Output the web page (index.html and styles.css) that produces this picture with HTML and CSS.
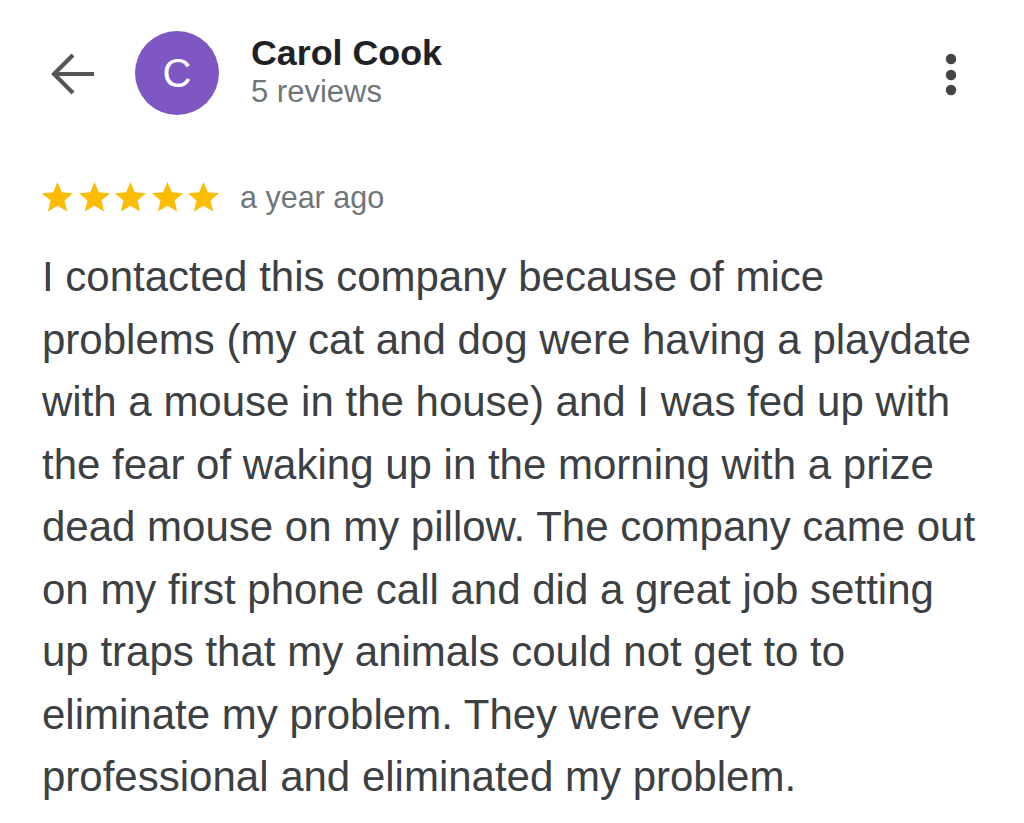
FILE: index.html
```html
<!DOCTYPE html>
<html>
<head>
<meta charset="utf-8">
<link rel="stylesheet" href="styles.css">
</head>
<body>
<div class="page">
  <header class="header">
    <svg class="back" width="44" height="44" viewBox="0 0 44 44"><path d="M43 22H4 M22 3L3 22L22 41" fill="none" stroke="#555" stroke-width="4.2"/></svg>
    <div class="avatar">C</div>
    <div class="who">
      <div class="name">Carol Cook</div>
      <div class="count">5 reviews</div>
    </div>
    <svg class="more" width="12" height="44" viewBox="0 0 12 44"><circle cx="6" cy="6" r="5.2" fill="#444"/><circle cx="6" cy="22" r="5.2" fill="#444"/><circle cx="6" cy="37" r="5.2" fill="#444"/></svg>
  </header>
  <div class="meta">
    <div class="stars">
      <svg viewBox="2 2 20 19.3"><path d="M12 17.27L18.18 21l-1.64-7.03L22 9.24l-7.19-.61L12 2 9.19 8.63 2 9.24l5.46 4.73L5.82 21z"/></svg>
      <svg viewBox="2 2 20 19.3"><path d="M12 17.27L18.18 21l-1.64-7.03L22 9.24l-7.19-.61L12 2 9.19 8.63 2 9.24l5.46 4.73L5.82 21z"/></svg>
      <svg viewBox="2 2 20 19.3"><path d="M12 17.27L18.18 21l-1.64-7.03L22 9.24l-7.19-.61L12 2 9.19 8.63 2 9.24l5.46 4.73L5.82 21z"/></svg>
      <svg viewBox="2 2 20 19.3"><path d="M12 17.27L18.18 21l-1.64-7.03L22 9.24l-7.19-.61L12 2 9.19 8.63 2 9.24l5.46 4.73L5.82 21z"/></svg>
      <svg viewBox="2 2 20 19.3"><path d="M12 17.27L18.18 21l-1.64-7.03L22 9.24l-7.19-.61L12 2 9.19 8.63 2 9.24l5.46 4.73L5.82 21z"/></svg>
    </div>
    <span class="when">a year ago</span>
  </div>
  <p class="review">I contacted this company because of mice<br>problems (my cat and dog were having a playdate<br>with a mouse in the house) and I was fed up with<br>the fear of waking up in the morning with a prize<br>dead mouse on my pillow. The company came out<br>on my first phone call and did a great job setting<br>up traps that my animals could not get to to<br>eliminate my problem. They were very<br>professional and eliminated my problem.</p>
</div>
</body>
</html>
```
FILE: styles.css
```css
html, body {
  margin: 0;
  padding: 0;
  background: #fff;
}
.page {
  width: 1024px;
  height: 823px;
  overflow: hidden;
  font-family: "Liberation Sans", Arial, sans-serif;
}
.header {
  display: flex;
  align-items: center;
  padding: 31px 0 0 51px;
  height: 84px;
}
.back {
  flex: none;
  margin-top: 2px;
}
.avatar {
  flex: none;
  width: 84px;
  height: 84px;
  border-radius: 50%;
  background: #7e57c2;
  color: #fff;
  font-size: 40px;
  display: flex;
  align-items: center;
  justify-content: center;
  margin-left: 40px;
}
.who {
  margin-left: 32px;
  flex: 1;
  align-self: flex-start;
  padding-top: 1px;
}
.name {
  font-size: 35.8px;
  font-weight: bold;
  color: #202124;
  line-height: 42px;
}
.count {
  font-size: 31px;
  color: #70757a;
  line-height: 36px;
}
.more {
  flex: none;
  margin-right: 67px;
  margin-top: 3px;
}
.meta {
  display: flex;
  align-items: center;
  padding: 64px 0 0 42px;
}
.stars {
  display: flex;
  gap: 5.5px;
}
.stars svg {
  width: 31px;
  height: 30px;
  fill: #fbbc04;
}
.when {
  margin-left: 21px;
  font-size: 30.5px;
  color: #70757a;
  line-height: 36px;
}
.review {
  margin: 31px 0 0 42px;
  font-size: 42px;
  line-height: 62.5px;
  color: #3c4043;
  white-space: nowrap;
}
```
